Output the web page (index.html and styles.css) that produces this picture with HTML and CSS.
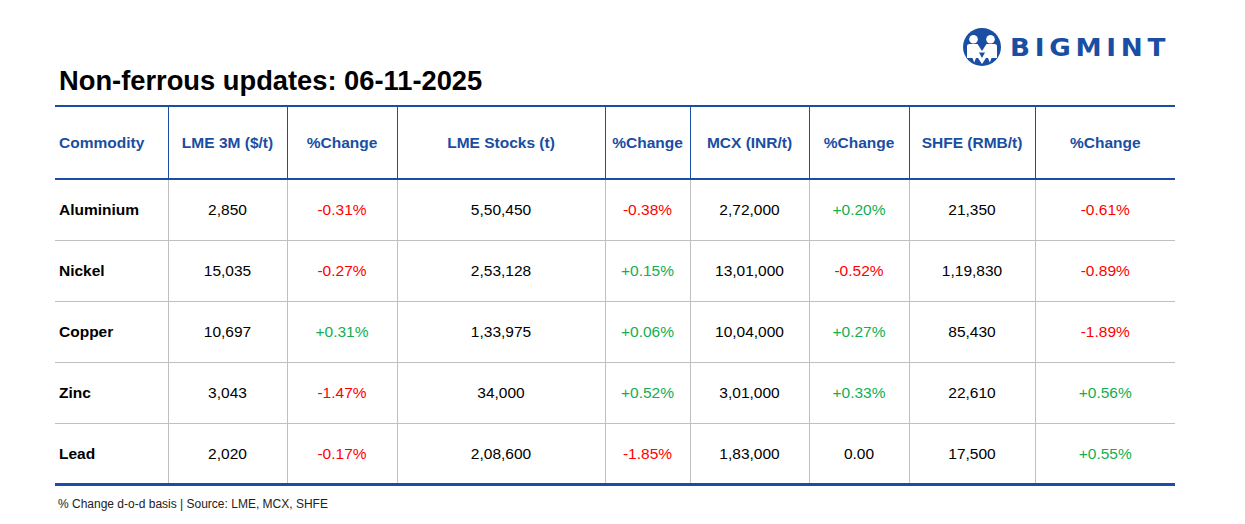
FILE: index.html
```html
<!DOCTYPE html>
<html lang="en">
<head>
<meta charset="utf-8">
<title>Non-ferrous updates</title>
<link rel="stylesheet" href="styles.css">
</head>
<body>
<div class="page">
  <div class="brand-row">
    <div class="brand">
      <svg class="brand-mark" viewBox="0 0 38 38" width="38" height="38" aria-hidden="true">
        <defs><clipPath id="c"><circle cx="19" cy="19" r="19"/></clipPath></defs>
        <circle cx="19" cy="19" r="19" fill="#1a4ea2"/>
        <g clip-path="url(#c)" fill="#fff">
          <circle cx="10.5" cy="11.2" r="4.3"/>
          <circle cx="27.5" cy="11.2" r="4.3"/>
          <path d="M4 18 Q4 16 6.5 16 H14.5 L19 23 L23.5 16 H31.5 Q34 16 34 18 V30 H28.5 L26.8 34.5 L25 30 H23 L19 36 L15 30 H13 L11.2 34.5 L9.5 30 H4 Z"/>
        </g>
        <path d="M16 24.5 L19 30 L22 24.5 Z" fill="#1a4ea2"/>
      </svg>
      <span class="brand-name">BIGMINT</span>
    </div>
  </div>
  <h1 class="title">Non-ferrous updates: 06-11-2025</h1>
  <table class="data">
    <colgroup>
      <col class="c1"><col class="c2"><col class="c3"><col class="c4"><col class="c5"><col class="c6"><col class="c7"><col class="c8"><col class="c9">
    </colgroup>
    <thead>
      <tr>
        <th class="left">Commodity</th>
        <th>LME 3M ($/t)</th>
        <th>%Change</th>
        <th>LME Stocks (t)</th>
        <th>%Change</th>
        <th>MCX (INR/t)</th>
        <th>%Change</th>
        <th>SHFE (RMB/t)</th>
        <th>%Change</th>
      </tr>
    </thead>
    <tbody>
      <tr>
        <td class="left name">Aluminium</td><td>2,850</td><td class="neg">-0.31%</td><td>5,50,450</td><td class="neg">-0.38%</td><td>2,72,000</td><td class="pos">+0.20%</td><td>21,350</td><td class="neg">-0.61%</td>
      </tr>
      <tr>
        <td class="left name">Nickel</td><td>15,035</td><td class="neg">-0.27%</td><td>2,53,128</td><td class="pos">+0.15%</td><td>13,01,000</td><td class="neg">-0.52%</td><td>1,19,830</td><td class="neg">-0.89%</td>
      </tr>
      <tr>
        <td class="left name">Copper</td><td>10,697</td><td class="pos">+0.31%</td><td>1,33,975</td><td class="pos">+0.06%</td><td>10,04,000</td><td class="pos">+0.27%</td><td>85,430</td><td class="neg">-1.89%</td>
      </tr>
      <tr>
        <td class="left name">Zinc</td><td>3,043</td><td class="neg">-1.47%</td><td>34,000</td><td class="pos">+0.52%</td><td>3,01,000</td><td class="pos">+0.33%</td><td>22,610</td><td class="pos">+0.56%</td>
      </tr>
      <tr class="last">
        <td class="left name">Lead</td><td>2,020</td><td class="neg">-0.17%</td><td>2,08,600</td><td class="neg">-1.85%</td><td>1,83,000</td><td>0.00</td><td>17,500</td><td class="pos">+0.55%</td>
      </tr>
    </tbody>
  </table>
  <p class="note">% Change d-o-d basis | Source: LME, MCX, SHFE</p>
</div>
</body>
</html>
```

FILE: styles.css
```css
html, body {
  margin: 0;
  padding: 0;
  background: #fff;
}
body {
  font-family: "Liberation Sans", Arial, sans-serif;
  color: #000;
}
.page {
  width: 1120px;
  margin-left: 55px;
}
.brand-row {
  display: flex;
  justify-content: flex-end;
  padding-top: 28px;
  height: 38px;
  padding-right: 16px;
}
.brand {
  display: flex;
  align-items: center;
  gap: 9px;
  height: 38px;
}
.brand-mark {
  display: block;
}
.brand-name {
  font-family: "DejaVu Sans", sans-serif;
  font-weight: bold;
  font-size: 25px;
  letter-spacing: 4.5px;
  margin-right: -4px;
  color: #1a4ea2;
  line-height: 1;
  transform: scaleX(1.05);
  transform-origin: left center;
}
.title {
  margin: -2px 0 0 4px;
  font-size: 27.3px;
  line-height: 34px;
  font-weight: bold;
  letter-spacing: 0;
  height: 41px;
}
.data {
  width: 1120px;
  table-layout: fixed;
  border-collapse: collapse;
  border-top: 2px solid #1a4ea2;
  border-bottom: 3px solid #1a4ea2;
}
.c1 { width: 113px; }
.c2 { width: 119px; }
.c3 { width: 110px; }
.c4 { width: 208px; }
.c5 { width: 85px; }
.c6 { width: 119px; }
.c7 { width: 100px; }
.c8 { width: 126px; }
.c9 { width: 140px; }
.data th {
  height: 71px;
  padding: 0;
  font-size: 15.5px;
  font-weight: bold;
  color: #1a4ea2;
  text-align: center;
  border-bottom: 2px solid #1a4ea2;
  border-left: 1px solid #1a4ea2;
  white-space: nowrap;
}
.data td {
  height: 60px;
  padding: 0;
  font-size: 15.5px;
  text-align: center;
  border-bottom: 1px solid #c0c0c0;
  border-left: 1px solid #c0c0c0;
  white-space: nowrap;
}
.data tr.last td {
  height: 59px;
  border-bottom: 3px solid #1a4ea2;
}
.data th:first-child,
.data td:first-child {
  border-left: none;
}
.data .left {
  text-align: left;
  padding-left: 4px;
}
.data .name {
  font-weight: bold;
}
.neg { color: #ff0000; }
.pos { color: #10b050; }
.note {
  margin: 11px 0 0 3px;
  font-size: 12px;
  color: #222;
}
```
